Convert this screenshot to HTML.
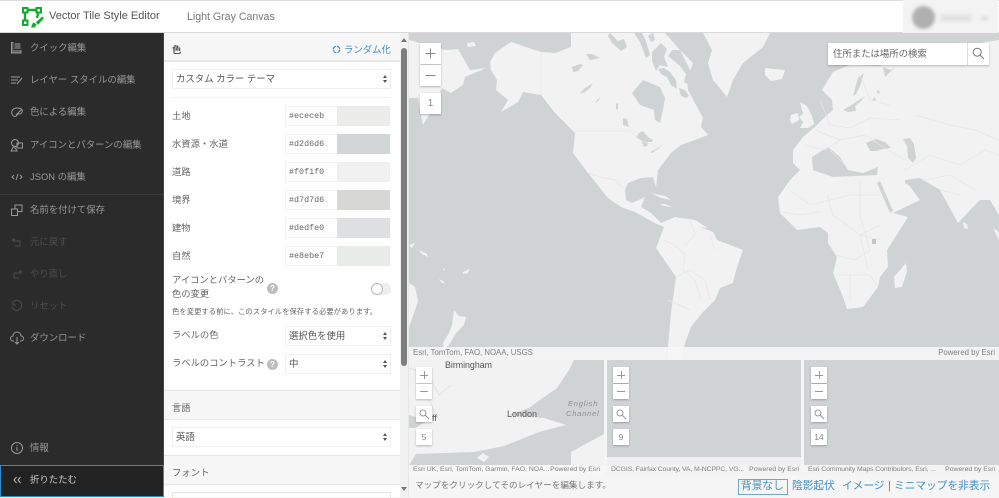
<!DOCTYPE html>
<html><head><meta charset="utf-8"><style>
*{box-sizing:border-box}
html,body{margin:0;padding:0;width:999px;height:497px;overflow:hidden;background:#f5f5f5;font-family:"Liberation Sans","Noto Sans CJK JP",sans-serif}
.a{position:absolute}
#hd{left:0;top:0;width:999px;height:33px;background:#fff;border-bottom:1px solid #d8d8d8;z-index:5;border-top:1px solid #ddd}
.t{position:absolute;white-space:nowrap;line-height:14px}
#sb{left:0;top:33px;width:164px;height:464px;background:#2b2b2b;border-right:1px solid #444}
.m{position:absolute;left:30px;font-size:9.4px;line-height:14px;color:#999;white-space:nowrap}
.m.d{color:#4e4e4e}
.ic{position:absolute;left:10px;width:14px;height:14px;fill:none;stroke:#999;stroke-width:1}
.ic.d{stroke:#4e4e4e}
#pn{left:164px;top:33px;width:236px;height:464px;background:#fff}
.l{position:absolute;left:8px;font-size:9.3px;color:#666;line-height:14px;white-space:nowrap}
.sel{position:absolute;background:#fff;border:1px solid #efefef;height:20px;font-size:9.4px;color:#555;line-height:18px;padding-left:3px;white-space:nowrap}
.sel:after{content:"";position:absolute;right:3px;top:5px;width:0;height:0;border:2.5px solid transparent;border-top:0;border-bottom:3px solid #555}
.sel:before{content:"";position:absolute;right:3px;top:10px;width:0;height:0;border:2.500px solid transparent;border-bottom:0;border-top:3px solid #555}
.h{position:absolute;left:0;width:236px;background:#f7f7f7;border-bottom:2px solid #e8e8e8}
.inp{position:absolute;left:121px;width:53px;height:20px;background:#fff;border:1px solid #f0f0f0;font:8.4px/19px "Liberation Mono",monospace;color:#666;padding-left:3px}
.sw{position:absolute;left:173px;width:53px;height:20px}
.q{position:absolute;width:11px;height:11px;border-radius:50%;background:#bdbdbd;color:#fff;font-size:8px;line-height:11px;text-align:center;font-weight:bold}
.b{position:absolute;background:#fff;box-shadow:0 1px 2px rgba(0,0,0,.25);text-align:center;color:#888;font-size:10px}
.at{position:absolute;font-size:6.850px;line-height:10px;color:#808080;white-space:nowrap}
.strip{position:absolute;background:rgba(245,246,245,.9)}
.st{position:absolute;font-size:10.700px;line-height:15px;color:#3f8fc4;white-space:nowrap}
</style></head><body>

<div class="a" style="left:409px;top:33px;width:590px;height:327px;overflow:hidden;background:#d0d3d4">
<svg width="590" height="327" viewBox="409 33 590 327" style="position:absolute;left:0;top:0">
<g fill="#f2f2f2" stroke="none">
<path d="M409 40L445 50L458 49L470 70L486 68L465 77L463 85L451 93L442 88L430 113L423 125L421 115L418 98L409 98Z"/>
<path d="M467 43l7-1 2 4-8 1z"/>
<path d="M491 70L490 62L495 53L511 42L541 52L555 53L571 47L571 33L665 33L680 50L693 63L687 80L688 90L695 103L703 118L701 127L708 135L695 140L681 145L671 153L658 170L656 187L653 177L641 178L628 183L625 190L626 200L632 203L645 197L641 207L651 213L661 223L675 217L695 220L708 228L700 227L713 232L717 240L743 250L737 267L733 283L720 288L715 300L703 312L691 327L685 343L681 360L668 360L668 347L671 313L676 277L656 248L664 227L655 223L635 212L621 207L608 198L588 173L573 153L575 133L555 113L541 95L523 92L518 102L501 112L508 100L496 90L497 80Z"/>
<path d="M651 193l14 3 6 4-10-2zM660 204l5 0 7 3-8-1z"/>
<path d="M409 283l6 4 3 14-4 12-5 14z"/>
<path d="M454 310l5 6 7 1-2 8-8 8-7 12-5 4-1-6 6-10 3-8z"/>
<path d="M463 272l7-3-2 4-5 1zM439 279l4 2 2 3-4-2zM409 245l6-2-3 5zM419 250l8 4 1 3-6-3zM443 268l2 1-1 2z"/>
<path d="M703 33L770 33L763 47L743 63L733 80L727 97L713 80L708 63L712 50Z"/>
<path d="M765 68l8 1 12 1-3 9-11 2-6-6z"/>
<path d="M822 90L833 72L850 65L880 66L885 64L960 46L999 40L999 215L990 200L980 200L972 208L958 223L940 190L920 178L905 180L920 200L893 213L908 217L887 250L888 267L880 277L878 287L863 307L847 309L843 297L833 273L837 257L828 243L828 233L820 227L797 230L780 213L778 197L790 180L800 170L793 163L793 150L803 137L815 127L827 115L833 110L832 100Z"/>
<path d="M800 102l7 4 5 10 2 8-6 4-8 0 3-6-4-5 4-3z"/>
<path d="M791 115l7-2 1 7-7 4-2-4z"/>
<path d="M906 263l1 8-5 16-7 1-1-11z"/>
<path d="M963 222l4 2 1 5-4-1zM993 228l6 4 0 8z"/>
</g>
<g fill="#d0d3d4" stroke="none">
<path d="M632 93L643 80L660 87L665 98L663 110L660 123L655 120L654 110L640 105Z"/>
<path d="M610 33l8 8 6-2 3 8-6 4-9-8-4-7zM634 33l6 9 6 16 4-3-4-14-4-8zM652 52l9-9 6 6-3 8 4 10-8-2-4 6-4-10zM670 72l-6-4-6 1 3 5 6 3 4 8 6 4-1-9zM600 58l-8-4-6 0 4 6zM648 36l3 6 4-2-2-7z"/>
<path d="M680 50l-8 0-4 6 12 10 6 8-2 8 3 2 5-10zM689 96l-4-6-6-2 2 8 5 2z"/>
<path d="M584 172l5 5 8 12 3 8-4-3-7-12-5-8z"/>
<path d="M572 67l8-3 3 1-5 6-5 1z M585 88l8-5-3 5-5 4-6 2z M597 100l4-3-3 4-3 2z M616 104l2-1 0 6-2 1z M623 118l4 1 2 8-6-2z"/>
<path d="M639 133l4-2 5 6 5 3-1 2-4 0-1 4-3 1-3-7-5-2z M650 152l8-4 8-6-8 7-6 4z"/>
<path d="M812 157L828 147L840 157L848 170L863 173L878 167L877 175L833 177L813 170Z"/>
<path d="M866 143l10-4 9 3 6 6-8 1-6 2-7 0z"/>
<path d="M903 139l7-1 4 6 2 14-3 5-5-5-1-12z"/>
<path d="M843 110l10-6 12-8-4 5-6 5 1 5-8 1z M853 96l5-18 6-5-4 13-4 8z M872 100l3-3 1 4z M876 92l3-2 1 4z M883 67l8 3 5-4-6 6-5 5z"/>
<path d="M877 183l3-2 13 30-3 2z"/>
<path d="M905 180l16 9 4 4-8-2-12-8z"/>
</g>
<g fill="none" stroke="#e6e6e6" stroke-width=".7">
<path d="M541 52L541 95M573 131L630 131L640 140L660 148M588 173L600 177L615 180L623 188"/>
<path d="M664 240L675 245L685 255L683 270L695 280L701 300M676 277L690 270L705 280L710 300M690 220L695 235L685 245M710 235L715 250M668 300L690 310"/>
<path d="M790 190L810 205L830 200L850 195L880 195M827 195L833 215L860 235L880 225M860 180L860 215L870 250L855 260L835 255M838 275L870 275L878 287M850 300L850 275M880 240L860 235L868 270M780 212L800 215L820 212"/>
<path d="M820 100L830 125L850 128L870 118L900 120M815 130L840 140L865 135L880 145L905 160M805 145L825 150L840 140M830 150L845 165M905 170L930 155L960 165L985 150L999 155M915 115L950 125L975 130L999 140M925 180L950 175L975 190"/>
<path d="M860 75L870 100L890 105M940 190L960 195"/>
</g>
<rect x="872" y="239" width="4" height="5" fill="#c4c7c8"/>
</svg>
<div class="strip" style="left:0;top:314px;width:590px;height:13px"></div>
<div class="at" style="left:4px;top:314px;font-size:7.800px;line-height:12px">Esri, TomTom, FAO, NOAA, USGS</div>
<div class="at" style="right:4px;top:314px;font-size:7.800px;line-height:12px">Powered by Esri</div>
</div>

<div class="b" style="left:420px;top:43px;width:21px;height:21px"><svg class="a" style="left:0;top:0" width="21" height="21" stroke="#888"><path d="M5.500 10.500h10M10.500 5.500v10"/></svg></div>
<div class="b" style="left:420px;top:65px;width:21px;height:21px"><svg class="a" style="left:0;top:0" width="21" height="21" stroke="#888"><path d="M5.500 10.500h10"/></svg></div>
<div class="b" style="left:420px;top:93px;width:21px;height:21px;line-height:21px">1</div>

<div class="b" style="left:828px;top:43px;width:161px;height:22px;text-align:left;padding-left:5px;font-size:9.400px;line-height:21px;color:#666">住所または場所の検索<div style="position:absolute;left:139px;top:0;width:1px;height:22px;background:#ddd"></div>
<svg class="a" style="left:144px;top:4px" width="13" height="13" viewBox="0 0 13 13" fill="none" stroke="#777" stroke-width="1"><circle cx="5.200" cy="5.200" r="4"/><path d="M8 8l4 4"/></svg></div>

<!-- minimaps -->
<div class="a" style="left:409px;top:360px;width:195px;height:115px;overflow:hidden;background:#f2f2f2">
<svg width="195" height="115" viewBox="0 0 195 115" style="position:absolute;left:0;top:0"><g fill="#d0d3d4">
<path d="M165 0L195 0L195 74L162 92L162 105L0 105L7 94L65 92L95 86L130 72L157 65L135 58L100 55L120 48L128 42L148 28L160 10Z"/>
<path d="M0 55L10 58L20 60L6 68L0 68Z"/>
</g><g fill="none" stroke="#dcdcdc" stroke-width=".7"><path d="M0 8L20 15L30 35L42 25M20 40L30 60"/></g>
<path d="M74 93l6 4-5 5-7-4z" fill="#f2f2f2"/></svg>
<div class="t" style="left:36px;top:-2px;font-size:8.800px;color:#555">Birmingham</div>
<div class="t" style="left:98px;top:47px;font-size:9px;color:#555">London</div>
<div class="t" style="left:21px;top:51px;font-size:9px;color:#555">iff</div>
<div class="t" style="left:159px;top:37px;font-size:7.500px;color:#8a8d8e;font-style:italic;letter-spacing:.8px">English</div>
<div class="t" style="left:157px;top:47px;font-size:7.500px;color:#8a8d8e;font-style:italic;letter-spacing:.8px">Channel</div>
<div class="strip" style="left:0;top:105px;width:195px;height:10px"></div>
<div class="at" style="left:4px;top:105px">Esri UK, Esri, TomTom, Garmin, FAO, NOA...</div>
<div class="at" style="right:4px;top:105px">Powered by Esri</div>
</div>
<div class="a" style="left:607px;top:360px;width:194px;height:115px;overflow:hidden;background:#d0d3d4">
<div class="a" style="left:0;top:97px;width:194px;height:8px;background:#efefef"></div>
<div class="strip" style="left:0;top:105px;width:194px;height:10px"></div>
<div class="at" style="left:4px;top:105px;letter-spacing:-.1px">DCGIS, Fairfax County, VA, M-NCPPC, VG...</div>
<div class="at" style="right:2px;top:105px">Powered by Esri</div>
</div>
<div class="a" style="left:804px;top:360px;width:195px;height:115px;overflow:hidden;background:#d0d3d4">
<div class="strip" style="left:0;top:105px;width:195px;height:10px"></div>
<div class="at" style="left:4px;top:105px;letter-spacing:-.08px">Esri Community Maps Contributors, Esri, ...</div>
<div class="at" style="right:4px;top:105px">Powered by Esri</div>
</div>

<div class="b" style="left:416px;top:367px;width:16px;height:16px"><svg class="a" style="left:0;top:0" width="16" height="16" stroke="#999"><path d="M4 8.500h8M8.500 4v8"/></svg></div>
<div class="b" style="left:416px;top:384px;width:16px;height:15px"><svg class="a" style="left:0;top:0" width="16" height="15" stroke="#999"><path d="M4 7.500h8"/></svg></div>
<div class="b" style="left:416px;top:406px;width:16px;height:16px"><svg width="16" height="16" fill="none" stroke="#999"><circle cx="7" cy="7" r="3"/><path d="M9 9l4 4"/></svg></div>
<div class="b" style="left:416px;top:429px;width:16px;height:16px;font-size:8.500px;line-height:16px">5</div>
<div class="b" style="left:613px;top:367px;width:16px;height:16px"><svg class="a" style="left:0;top:0" width="16" height="16" stroke="#999"><path d="M4 8.500h8M8.500 4v8"/></svg></div>
<div class="b" style="left:613px;top:384px;width:16px;height:15px"><svg class="a" style="left:0;top:0" width="16" height="15" stroke="#999"><path d="M4 7.500h8"/></svg></div>
<div class="b" style="left:613px;top:406px;width:16px;height:16px"><svg width="16" height="16" fill="none" stroke="#999"><circle cx="7" cy="7" r="3"/><path d="M9 9l4 4"/></svg></div>
<div class="b" style="left:613px;top:429px;width:16px;height:16px;font-size:8.500px;line-height:16px">9</div>
<div class="b" style="left:811px;top:367px;width:16px;height:16px"><svg class="a" style="left:0;top:0" width="16" height="16" stroke="#999"><path d="M4 8.500h8M8.500 4v8"/></svg></div>
<div class="b" style="left:811px;top:384px;width:16px;height:15px"><svg class="a" style="left:0;top:0" width="16" height="15" stroke="#999"><path d="M4 7.500h8"/></svg></div>
<div class="b" style="left:811px;top:406px;width:16px;height:16px"><svg width="16" height="16" fill="none" stroke="#999"><circle cx="7" cy="7" r="3"/><path d="M9 9l4 4"/></svg></div>
<div class="b" style="left:811px;top:429px;width:16px;height:16px;font-size:8.500px;line-height:16px">14</div>

<!-- status -->
<div class="t" style="left:415px;top:478px;font-size:8.600px;color:#777">マップをクリックしてそのレイヤーを編集します。</div>
<div class="a" style="left:738px;top:479px;width:50px;height:16px;border:1px solid #6aa9d3"></div>
<div class="st" style="left:741px;top:479px;color:#4a90c0">背景なし</div>
<div class="st" style="left:792px;top:479px">陰影起伏</div>
<div class="st" style="left:842px;top:479px">イメージ</div>
<div class="st" style="left:888px;top:479px;color:#777">|</div>
<div class="st" style="left:894px;top:479px">ミニマップを非表示</div>

<!-- panel -->
<div class="a" id="pn">
<div class="h" style="top:0;height:29px"></div>
<div class="l" style="top:10px;font-weight:bold;color:#555">色</div>
<svg class="a" style="left:168px;top:12px" width="9" height="9" fill="none" stroke="#3f8fc4" stroke-width="1.200"><circle cx="4.500" cy="4.500" r="3.200" stroke-dasharray="4 1"/></svg>
<div class="t" style="left:180px;top:10px;font-size:9.400px;color:#3f8fc4">ランダム化</div>
<div class="sel" style="left:8px;top:36px;width:219px">カスタム カラー テーマ</div>
<div class="a" style="left:8px;top:64px;width:218px;height:1px;background:#eee"></div>

<div class="l" style="top:76px">土地</div><div class="inp" style="top:73px">#ececeb</div><div class="sw" style="top:73px;background:#ececeb"></div>
<div class="l" style="top:104px">水資源・水道</div><div class="inp" style="top:101px">#d2d6d6</div><div class="sw" style="top:101px;background:#d2d6d6"></div>
<div class="l" style="top:132px">道路</div><div class="inp" style="top:129px">#f0f1f0</div><div class="sw" style="top:129px;background:#f0f1f0"></div>
<div class="l" style="top:160px">境界</div><div class="inp" style="top:157px">#d7d7d6</div><div class="sw" style="top:157px;background:#d7d7d6"></div>
<div class="l" style="top:188px">建物</div><div class="inp" style="top:185px">#dedfe0</div><div class="sw" style="top:185px;background:#dedfe0"></div>
<div class="l" style="top:216px">自然</div><div class="inp" style="top:213px">#e8ebe7</div><div class="sw" style="top:213px;background:#e8ebe7"></div>

<div class="l" style="top:240px">アイコンとパターンの</div>
<div class="l" style="top:254px">色の変更</div>
<div class="q" style="left:103px;top:250px">?</div>
<div class="a" style="left:207px;top:250px;width:20px;height:12px;border-radius:6px;background:#eee"></div>
<div class="a" style="left:207px;top:250px;width:12px;height:12px;border-radius:6px;background:#fff;border:1px solid #bbb"></div>
<div class="t" style="left:8px;top:272px;font-size:7.360px;color:#666">色を変更する前に、このスタイルを保存する必要があります。</div>

<div class="l" style="top:295px">ラベルの色</div>
<div class="sel" style="left:121px;top:293px;width:106px">選択色を使用</div>
<div class="l" style="top:323px">ラベルのコントラスト</div>
<div class="q" style="left:103px;top:326px">?</div>
<div class="sel" style="left:121px;top:321px;width:106px">中</div>

<div class="h" style="top:357px;height:30px;border-top:1px solid #e4e4e4;border-bottom-width:1px"></div>
<div class="l" style="top:368px">言語</div>
<div class="sel" style="left:8px;top:394px;width:219px">英語</div>
<div class="h" style="top:422px;height:30px;border-top:1px solid #e4e4e4;border-bottom-width:1px"></div>
<div class="l" style="top:433px;font-size:9.400px">フォント</div>
<div class="a" style="left:8px;top:459px;width:219px;height:6px;border:1px solid #e4e4e4;border-bottom:0"></div>
</div>

<!-- scrollbar -->
<div class="a" style="left:400px;top:33px;width:8px;height:464px;background:#f1f1f1"></div>
<div class="a" style="left:401px;top:48px;width:6px;height:318px;background:#7d7d7d;border-radius:3px"></div>
<div class="a" style="left:401px;top:38px;width:0;height:0;border:3px solid transparent;border-top:0;border-bottom:4px solid #777"></div>
<div class="a" style="left:401px;top:487px;width:0;height:0;border:3px solid transparent;border-bottom:0;border-top:4px solid #777"></div>
<div class="a" style="left:408px;top:33px;width:1px;height:464px;background:#e6e6e6"></div>

<!-- sidebar -->
<div class="a" id="sb">
<svg class="ic" style="top:8px" viewBox="0 0 14 14"><rect x="1.500" y="1.500" width="9.500" height="10.500" fill="#666"/><path d="M4 1.500h7v7H4z" stroke="#2b2b2b"/></svg>
<div class="m" style="top:8px">クイック編集</div>
<svg class="ic" style="top:40px" viewBox="0 0 14 14"><path d="M1 4h9M1 7h7M1 10h5M7 11l5-6"/></svg>
<div class="m" style="top:40px">レイヤー スタイルの編集</div>
<svg class="ic" style="top:72px" viewBox="0 0 14 14"><path d="M7 3C3 3 1 6 2 9s4 3 5 1 2-1 3-1 3-2 2-4-3-2-5-2z"/><path d="M6 10l6-6"/></svg>
<div class="m" style="top:72px">色による編集</div>
<svg class="ic" style="top:105px" viewBox="0 0 14 14"><circle cx="5" cy="5" r="3.500"/><rect x="7" y="5" width="5.500" height="5"/><path d="M1 13l3-5 3 5z"/></svg>
<div class="m" style="top:105px">アイコンとパターンの編集</div>
<svg class="ic" style="top:137px" viewBox="0 0 14 14"><path d="M4 5L2 7l2 2M10 5l2 2-2 2M8 4L6 10"/></svg>
<div class="m" style="top:137px">JSON の編集</div>
<div class="a" style="left:0;top:161px;width:163px;height:1px;background:#3b3b3b"></div>
<svg class="ic" style="top:170px" viewBox="0 0 14 14"><rect x="1.500" y="6" width="6" height="6.500"/><path d="M5 6V2h7v6.500H7.500"/></svg>
<div class="m" style="top:170px">名前を付けて保存</div>
<svg class="ic d" style="top:202px" viewBox="0 0 14 14"><path d="M3 3v3h7v5H5M3 6l2-2"/></svg>
<div class="m d" style="top:202px">元に戻す</div>
<svg class="ic d" style="top:234px" viewBox="0 0 14 14"><path d="M11 3v3H4v5h5M11 6L9 4"/></svg>
<div class="m d" style="top:234px">やり直し</div>
<svg class="ic d" style="top:266px" viewBox="0 0 14 14"><path d="M3 3a5 5 0 1 1-1 5M3 3v3h3"/></svg>
<div class="m d" style="top:266px">リセット</div>
<svg class="ic" style="top:298px" viewBox="0 0 14 14"><path d="M4 10H3a2.500 2.500 0 0 1 0-5 4 4 0 0 1 8 0 2.500 2.500 0 0 1 0 5h-1M7 6v7M5 11l2 2 2-2"/></svg>
<div class="m" style="top:298px">ダウンロード</div>
<svg class="ic" style="top:408px" viewBox="0 0 14 14"><circle cx="7" cy="7" r="5.500"/><path d="M7 6v4M7 4v1"/></svg>
<div class="m" style="top:408px">情報</div>
<div class="a" style="left:0;top:432px;width:164px;height:32px;background:#222;border:1px solid #2c8fd6"></div>
<svg class="a" style="left:13px;top:443px" width="8" height="8" fill="none" stroke="#bbb"><path d="M3.500 1L1 4l2.500 3M7.500 1L5 4l2.500 3"/></svg>
<div class="m" style="top:440px;color:#ccc">折りたたむ</div>
</div>

<!-- header -->
<div class="a" id="hd"></div>
<svg class="a" style="left:22px;top:7px;z-index:6" width="22" height="21" viewBox="0 0 22 21" fill="none"><path d="M3 3H17L15 11M3 3V15" stroke="#14a82e" stroke-width="2.400"/><g fill="#fff" stroke="#14a82e" stroke-width="2"><rect x="1" y="1" width="4.500" height="4.500"/><rect x="14.500" y="1" width="4.500" height="4.500"/><rect x="1" y="13.500" width="4.500" height="4.500"/></g><path d="M9 20.500l2-5 3.500 1.500-1.500 3.500z M14 15l6.500-5.500 1.500 1.500-6 7z" fill="#14a82e"/></svg>
<div class="t" style="left:49px;top:9px;font-size:11px;color:#555;z-index:6">Vector Tile Style Editor</div>
<div class="t" style="left:187px;top:10px;font-size:10.600px;color:#777;z-index:6">Light Gray Canvas</div>
<div class="a" style="left:903px;top:0;width:95px;height:33px;background:#f3f3f3;z-index:6;overflow:hidden">
<div class="a" style="left:9px;top:6px;width:23px;height:23px;border-radius:50%;background:#b0b0b0;filter:blur(1.500px)"></div>
<div class="a" style="left:38px;top:15px;width:30px;height:6px;background:#ddd;filter:blur(2px)"></div>
<div class="a" style="left:78px;top:16px;width:7px;height:4px;background:#ddd;filter:blur(1.500px)"></div>
</div>
</body></html>
